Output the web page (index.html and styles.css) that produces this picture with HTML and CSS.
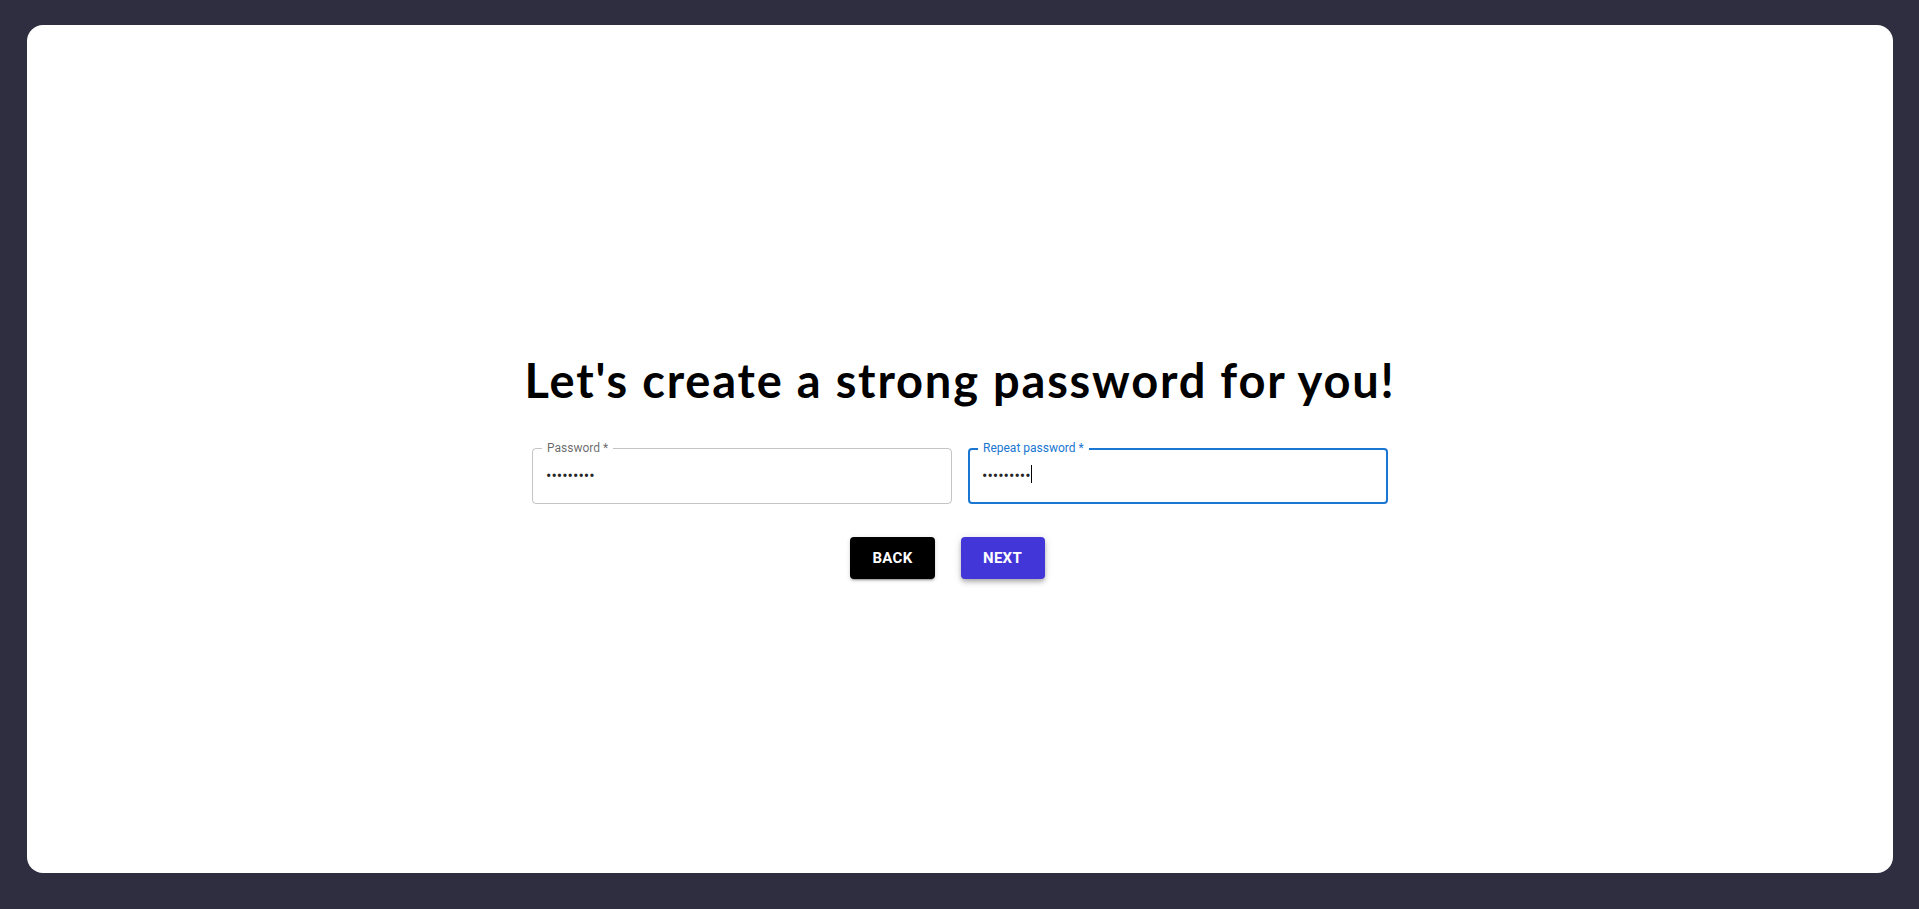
FILE: index.html
```html
<!DOCTYPE html>
<html lang="en">
<head>
<meta charset="utf-8">
<title>Create password</title>
<link rel="stylesheet" href="styles.css">
</head>
<body>
<main class="card">
  <section class="content">
    <h1 class="title">Let's create a strong password for you!</h1>
    <div class="fields">
      <div class="field">
        <label class="field-label">Password *</label>
        <input class="field-input" type="password" value="123456789" readonly>
      </div>
      <div class="field field-focused">
        <label class="field-label">Repeat password *</label>
        <input class="field-input" type="password" value="123456789" readonly>
        <span class="caret"></span>
      </div>
    </div>
    <div class="actions">
      <button class="btn btn-back" type="button">Back</button>
      <button class="btn btn-next" type="button">Next</button>
    </div>
  </section>
</main>
</body>
</html>
```

FILE: styles.css
```css
* { box-sizing: border-box; }
html, body { height: 100%; }
body {
  margin: 0;
  background: #2f2e41;
  padding: 25px 26px 36px 27px;
  font-family: Roboto, "Liberation Sans", sans-serif;
}
.card {
  height: 100%;
  background: #ffffff;
  border-radius: 16px;
  display: flex;
  align-items: center;
  justify-content: center;
}
.content {
  display: flex;
  flex-direction: column;
  align-items: center;
  margin-top: 32px;
}
.title {
  margin: 0;
  font-family: Lato, "DejaVu Sans", sans-serif;
  font-weight: 700;
  font-size: 47px;
  line-height: 56px;
  letter-spacing: 1.8px;
  color: #000;
}
.fields {
  display: flex;
  gap: 16px;
  margin-top: 40px;
}
.field {
  position: relative;
  width: 420px;
  height: 56px;
  border: 1px solid rgba(0, 0, 0, 0.23);
  border-radius: 4px;
}
.field-focused {
  border: 2px solid #1976d2;
}
.field-label {
  position: absolute;
  left: 9px;
  top: -9px;
  padding: 0 5px;
  background: #fff;
  font-size: 12px;
  line-height: 16px;
  color: rgba(0, 0, 0, 0.6);
}
.field-focused .field-label {
  left: 8px;
  top: -10px;
  color: #1976d2;
}
.field-input {
  display: block;
  width: 100%;
  height: 100%;
  border: 0;
  outline: 0;
  background: transparent;
  padding: 0 13px;
  font-family: Roboto, sans-serif;
  font-size: 16px;
  color: rgba(0, 0, 0, 0.87);
}
.field-focused .field-input {
  padding: 0 12px;
}
.caret {
  position: absolute;
  left: 61px;
  top: 15px;
  width: 1px;
  height: 18px;
  background: #000;
}
.actions {
  display: flex;
  gap: 26px;
  margin-top: 33px;
  margin-right: 25px;
}
.btn {
  height: 42px;
  padding: 0 22px;
  border: 0;
  border-radius: 4px;
  font-family: Roboto, sans-serif;
  font-weight: 700;
  font-size: 15px;
  letter-spacing: 0.3px;
  text-transform: uppercase;
  color: #fff;
  min-width: 84px;
  box-shadow: 0 3px 1px -2px rgba(0,0,0,0.2), 0 2px 2px 0 rgba(0,0,0,0.14), 0 1px 5px 0 rgba(0,0,0,0.12);
}
.btn-back { background: #000; }
.btn-next {
  background: #4336d8;
  box-shadow: 0 2px 4px -1px rgba(0,0,0,0.2), 0 4px 5px 0 rgba(0,0,0,0.14), 0 1px 10px 0 rgba(0,0,0,0.12);
}
```
